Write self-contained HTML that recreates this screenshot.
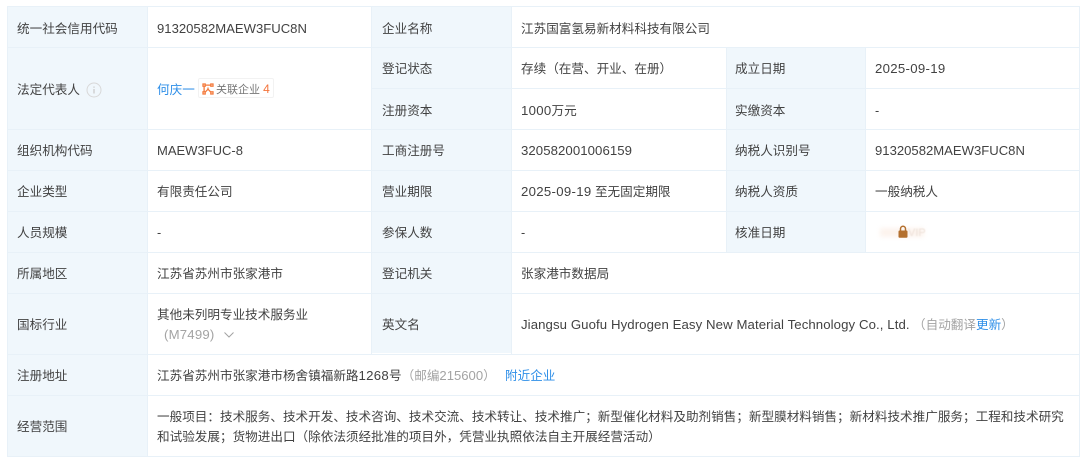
<!DOCTYPE html>
<html lang="zh-CN"><head><meta charset="utf-8"><style>
html,body{margin:0;padding:0;width:1080px;height:458px;overflow:hidden;background:#fff}
body{position:relative;font-family:"Liberation Sans","Noto Sans CJK SC",sans-serif;font-size:12.6px;color:#424242;filter:blur(.3px)}
.b{position:absolute;background:#f0f7fc}
.h,.v{position:absolute;background:#e8f1f8}
.h{height:1px}.v{width:1px}
.t{position:absolute;white-space:nowrap;line-height:18px;height:18px;margin-top:1px}
svg{margin-top:1px}
.g{color:#a3a3a3}.a{color:#2f8fe8}
.n{font-size:13.1px}.d{font-size:13.2px;letter-spacing:.3px}.e{font-size:13.2px;letter-spacing:.09px}
</style></head><body>
<div class="b" style="left:7px;top:6px;width:140px;height:450px"></div>
<div class="b" style="left:372px;top:6px;width:139px;height:347px"></div>
<div class="b" style="left:727px;top:47px;width:138px;height:205px"></div>

<div class="h" style="left:7px;top:6px;width:1073px"></div>
<div class="h" style="left:7px;top:47px;width:1073px"></div>
<div class="h" style="left:372px;top:88px;width:708px"></div>
<div class="h" style="left:7px;top:129px;width:1073px"></div>
<div class="h" style="left:7px;top:170px;width:1073px"></div>
<div class="h" style="left:7px;top:211px;width:1073px"></div>
<div class="h" style="left:7px;top:252px;width:1073px"></div>
<div class="h" style="left:7px;top:293px;width:1073px"></div>
<div class="h" style="left:7px;top:354px;width:1073px"></div>
<div class="h" style="left:7px;top:395px;width:1073px"></div>
<div class="h" style="left:7px;top:456px;width:1073px"></div>
<div class="v" style="left:7px;top:6px;height:450px"></div>
<div class="v" style="left:147px;top:6px;height:450px"></div>
<div class="v" style="left:371px;top:6px;height:348px"></div>
<div class="v" style="left:511px;top:6px;height:348px"></div>
<div class="v" style="left:726px;top:47px;height:205px"></div>
<div class="v" style="left:865px;top:47px;height:205px"></div>
<div class="v" style="left:1079px;top:6px;height:450px"></div>

<div class="t" style="left:17px;top:19px">统一社会信用代码</div>
<div class="t n" style="left:157px;top:19px">91320582MAEW3FUC8N</div>
<div class="t" style="left:382px;top:19px">企业名称</div>
<div class="t" style="left:521px;top:19px">江苏国富氢易新材料科技有限公司</div>

<div class="t" style="left:17px;top:80px">法定代表人</div>
<svg style="position:absolute;left:86px;top:81px" width="16" height="16" viewBox="0 0 16 16" fill="none"><circle cx="8" cy="8" r="7" stroke="#d8d8d8"/><path d="M8 7v4.5M8 4.5v1.2" stroke="#c8c8c8" stroke-width="1.2"/></svg>
<div class="t a" style="left:157px;top:80px">何庆一</div>
<div style="position:absolute;left:198px;top:78px;width:76px;height:20px;border:1px solid #f2f2f2;border-radius:2px;box-sizing:border-box"></div>
<svg style="position:absolute;left:202px;top:82px" width="12" height="12" viewBox="0 0 12 12" fill="none" stroke="#f47a3c" stroke-width="1.3"><rect x="1" y="1" width="2.2" height="2.2"/><rect x="8.8" y="1" width="2.2" height="2.2"/><rect x="1" y="8.8" width="2.2" height="2.2"/><rect x="8.8" y="8.8" width="2.2" height="2.2"/><path d="M3.2 2.1h5.6M2.1 3.2v5.6M3.5 8.8L6 6.2L8.5 8.8M6 6.2V4.5"/></svg>
<div class="t" style="left:216px;top:79px;font-size:11px;color:#777">关联企业 <span style="color:#f4743b;font-size:12px">4</span></div>

<div class="t" style="left:382px;top:59px">登记状态</div>
<div class="t" style="left:521px;top:59px">存续（在营、开业、在册）</div>
<div class="t" style="left:735px;top:59px">成立日期</div>
<div class="t d" style="left:875px;top:59px">2025-09-19</div>

<div class="t" style="left:382px;top:101px">注册资本</div>
<div class="t" style="left:521px;top:101px"><span class="d">1000</span>万元</div>
<div class="t" style="left:735px;top:101px">实缴资本</div>
<div class="t" style="left:875px;top:101px">-</div>

<div class="t" style="left:17px;top:141px">组织机构代码</div>
<div class="t" style="left:157px;top:141px;font-size:13px">MAEW3FUC-8</div>
<div class="t" style="left:382px;top:141px">工商注册号</div>
<div class="t" style="left:521px;top:141px;font-size:13.2px;letter-spacing:.07px">320582001006159</div>
<div class="t" style="left:735px;top:141px">纳税人识别号</div>
<div class="t n" style="left:875px;top:141px">91320582MAEW3FUC8N</div>

<div class="t" style="left:17px;top:182px">企业类型</div>
<div class="t" style="left:157px;top:182px">有限责任公司</div>
<div class="t" style="left:382px;top:182px">营业期限</div>
<div class="t" style="left:521px;top:182px"><span class="d">2025-09-19</span> 至无固定期限</div>
<div class="t" style="left:735px;top:182px">纳税人资质</div>
<div class="t" style="left:875px;top:182px">一般纳税人</div>

<div class="t" style="left:17px;top:223px">人员规模</div>
<div class="t" style="left:157px;top:223px">-</div>
<div class="t" style="left:382px;top:223px">参保人数</div>
<div class="t" style="left:521px;top:223px">-</div>
<div class="t" style="left:735px;top:223px">核准日期</div>
<div style="position:absolute;left:880px;top:228px;width:44px;height:9px;background:#fdf4ee;filter:blur(2px)"></div>
<svg style="position:absolute;left:898px;top:224px" width="10" height="13" viewBox="0 0 10 13"><path d="M2.5 6V3.8a2.5 2.5 0 0 1 5 0V6" fill="none" stroke="#b4702f" stroke-width="1.5"/><rect x=".5" y="5.5" width="9" height="7.2" rx="1" fill="#b4702f"/></svg>
<div class="t" style="left:908px;top:223px;font-size:11px;color:#eee2da;filter:blur(.6px)">VIP</div>

<div class="t" style="left:17px;top:264px">所属地区</div>
<div class="t" style="left:157px;top:264px">江苏省苏州市张家港市</div>
<div class="t" style="left:382px;top:264px">登记机关</div>
<div class="t" style="left:521px;top:264px">张家港市数据局</div>

<div class="t" style="left:17px;top:315px">国标行业</div>
<div class="t" style="left:157px;top:305px">其他未列明专业技术服务业</div>
<div class="t g" style="left:164px;top:325px;font-size:13.2px;letter-spacing:.2px">(M7499)</div>
<svg style="position:absolute;left:223px;top:330px" width="12" height="8" viewBox="0 0 12 8" fill="none"><path d="M1.5 1.5L6 6l4.5-4.5" stroke="#a3a3a3"/></svg>
<div class="t" style="left:382px;top:315px">英文名</div>
<div class="t e" style="left:521px;top:315px">Jiangsu Guofu Hydrogen Easy New Material Technology Co., Ltd.</div>
<div class="t g" style="left:913px;top:315px">（自动翻译<span class="a">更新</span>）</div>

<div class="t" style="left:17px;top:366px">注册地址</div>
<div class="t" style="left:157px;top:366px">江苏省苏州市张家港市杨舍镇福新路<span class="d">1268</span>号<span class="g">（邮编<span class="n">215600</span>）</span></div>
<div class="t a" style="left:505px;top:366px">附近企业</div>

<div class="t" style="left:17px;top:417px">经营范围</div>
<div class="t" style="left:157px;top:407px">一般项目：技术服务、技术开发、技术咨询、技术交流、技术转让、技术推广；新型催化材料及助剂销售；新型膜材料销售；新材料技术推广服务；工程和技术研究</div>
<div class="t" style="left:157px;top:427px">和试验发展；货物进出口（除依法须经批准的项目外，凭营业执照依法自主开展经营活动）</div>
</body></html>
